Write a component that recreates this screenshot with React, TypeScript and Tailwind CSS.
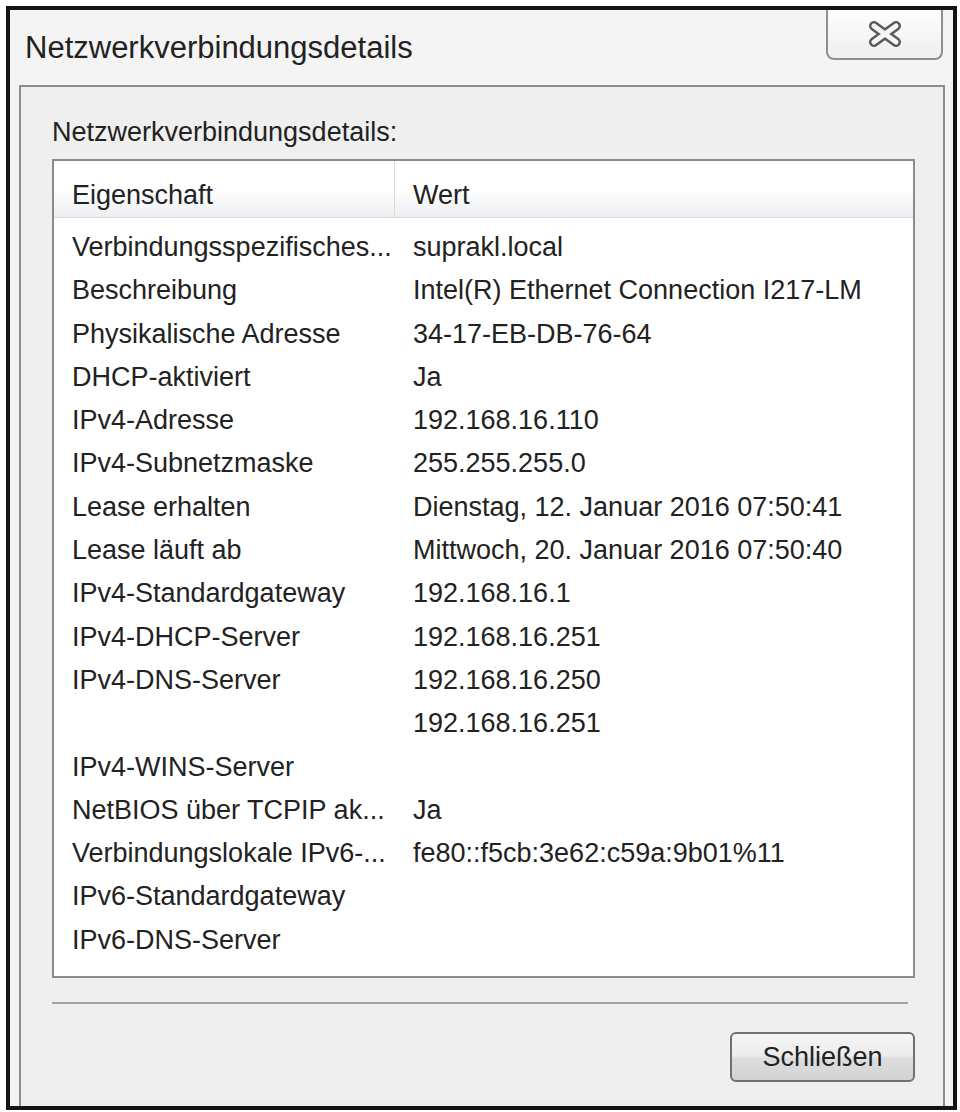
const rows: [string, string][] = [
  ["Verbindungsspezifisches...", "suprakl.local"],
  ["Beschreibung", "Intel(R) Ethernet Connection I217-LM"],
  ["Physikalische Adresse", "34-17-EB-DB-76-64"],
  ["DHCP-aktiviert", "Ja"],
  ["IPv4-Adresse", "192.168.16.110"],
  ["IPv4-Subnetzmaske", "255.255.255.0"],
  ["Lease erhalten", "Dienstag, 12. Januar 2016 07:50:41"],
  ["Lease läuft ab", "Mittwoch, 20. Januar 2016 07:50:40"],
  ["IPv4-Standardgateway", "192.168.16.1"],
  ["IPv4-DHCP-Server", "192.168.16.251"],
  ["IPv4-DNS-Server", "192.168.16.250"],
  ["", "192.168.16.251"],
  ["IPv4-WINS-Server", ""],
  ["NetBIOS über TCPIP ak...", "Ja"],
  ["Verbindungslokale IPv6-...", "fe80::f5cb:3e62:c59a:9b01%11"],
  ["IPv6-Standardgateway", ""],
  ["IPv6-DNS-Server", ""],
];

function CloseGlyph() {
  // hollow "x" of the caption button: dark outline stroke, light stroke on top
  return (
    <svg width="36" height="28" viewBox="0 0 36 28">
      <path d="M7 6 L29 22 M29 6 L7 22" stroke="#5a5a5a" strokeWidth="10" strokeLinecap="round" fill="none" />
      <path d="M7 6 L29 22 M29 6 L7 22" stroke="#f6f6f6" strokeWidth="5" strokeLinecap="round" fill="none" />
    </svg>
  );
}

export default function App() {
  return (
    <div className="min-h-[1112px] bg-white pt-[6px] pl-[6px] font-['Liberation_Sans',Arial,sans-serif] text-[#222]">
      <div className="flex h-[1104px] w-[951px] flex-col border-4 border-[#141414] bg-[#f4f4f4]">
        {/* caption */}
        <div className="flex h-[75px] shrink-0 justify-between">
          <div className="pl-[15px] pt-[20px] text-[31px] leading-[36px] whitespace-nowrap">
            Netzwerkverbindungsdetails
          </div>
          <button className="mr-[10px] flex h-[50px] w-[117px] items-center justify-center rounded-b-[8px] border-2 border-t-0 border-[#8f8f8f] bg-gradient-to-b from-[#fdfdfd] to-[#efefef]">
            <CloseGlyph />
          </button>
        </div>

        {/* client area */}
        <div className="ml-[9px] mr-[8px] flex-1 border-2 border-b-0 border-[#8c8c8c] bg-[#efefef] pl-[31px] pr-[28px]">
          <div className="pt-[30px] text-[27px] leading-[31px] whitespace-nowrap">
            Netzwerkverbindungsdetails:
          </div>

          <div className="mt-[11px] h-[819px] border-2 border-[#8b8b8b] bg-white text-[27px]">
            <div className="grid h-[57px] grid-cols-[341px_1fr] border-b border-[#d6d6d6] bg-gradient-to-b from-white via-white to-[#eceef1]">
              <div className="border-r border-[#dadada] pl-[18px] pt-[19px] leading-[31px]">Eigenschaft</div>
              <div className="pl-[18px] pt-[19px] leading-[31px]">Wert</div>
            </div>
            <div className="pt-[8px]">
              {rows.map(([name, value], i) => (
                <div key={i} className="grid h-[43.3px] grid-cols-[341px_1fr] leading-[43.3px] whitespace-nowrap">
                  <div className="pl-[18px]">{name}</div>
                  <div className="pl-[18px]">{value}</div>
                </div>
              ))}
            </div>
          </div>

          <div className="mt-[24px] h-[2px] w-[856px] bg-[#a3a3a3]" />

          <div className="mt-[28px] flex justify-end">
            <button className="h-[50px] w-[185px] rounded-[6px] border-2 border-[#707070] bg-[linear-gradient(to_bottom,#f5f5f5_0%,#ececec_48%,#dedede_52%,#d3d3d3_100%)] text-[27px] leading-[46px] text-[#222]">
              Schließen
            </button>
          </div>
        </div>
      </div>
    </div>
  );
}
